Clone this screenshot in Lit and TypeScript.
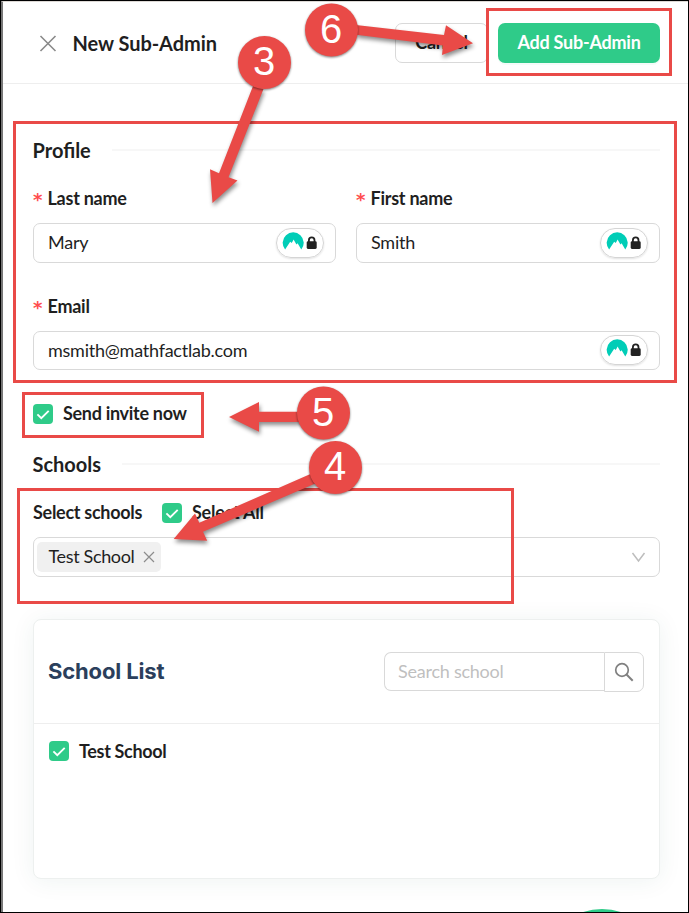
import { LitElement, html, css, svg } from 'lit';
import { customElement, property } from 'lit/decorators.js';

@customElement('check-box')
class CheckBox extends LitElement {
    static styles = css`
        :host {
            display: flex;
            align-items: center;
            gap: 10px;
            height: 20px;
            white-space: nowrap;
        }
        .box {
            width: 20px;
            height: 20px;
            border-radius: 4px;
            background: #2fcb89;
            flex: none;
        }
        .text {
            padding-bottom: var(--text-lift, 2px);
        }
        svg {
            display: block;
        }
    `;

    render() {
        return html`
            <div class="box">
                <svg width="20" height="20" viewBox="0 0 20 20" fill="none" stroke="#fff" stroke-width="1.9">
                    <path d="M4.4 10.4 L8.3 14.1 L15.7 6.9" />
                </svg>
            </div>
            <div class="text"><slot></slot></div>
        `;
    }
}

@customElement('section-title')
class SectionTitle extends LitElement {
    static styles = css`
        :host {
            display: flex;
            align-items: center;
            gap: 21px;
            height: 30px;
            font-size: 20px;
            font-weight: 700;
            white-space: nowrap;
        }
        .text {
            margin-left: -0.5px;
        }
        .line {
            flex: 1;
            height: 2px;
            background: #f7f7f7;
        }
    `;

    render() {
        return html`<div class="text"><slot></slot></div><div class="line"></div>`;
    }
}

@customElement('text-field')
class TextField extends LitElement {
    static styles = css`
        :host {
            display: block;
        }
        .label {
            display: flex;
            gap: 4.5px;
            height: 24px;
            line-height: 24px;
            margin-bottom: 13px;
            font-weight: 700;
            font-size: 18px;
            letter-spacing: -0.25px;
        }
        .star {
            color: #ff4d4f;
            font: 700 18px/27px "DejaVu Sans", sans-serif;
            width: 10px;
        }
        .input {
            box-sizing: border-box;
            height: var(--field-height, 40px);
            border: 1px solid #d9d9d9;
            border-radius: 7px;
            background: #fff;
            padding: 0 11px 0 14px;
            display: flex;
            align-items: center;
            justify-content: space-between;
        }
        .value {
            padding-bottom: 2px;
        }
        .vault {
            box-sizing: border-box;
            width: 48px;
            height: 30px;
            margin-bottom: var(--vault-lift, 0);
            border: 1px solid #d5d5d5;
            border-radius: 15px;
            box-shadow: 0 1px 2px rgba(0, 0, 0, 0.12);
            display: flex;
            align-items: center;
        }
    `;

    @property() label = '';
    @property() value = '';

    render() {
        return html`
            <div class="label"><span class="star">*</span>${this.label}</div>
            <div class="input">
                <span class="value">${this.value}</span>
                <div class="vault">
                    <svg width="46" height="28" viewBox="0 0 46 28">
                        <path fill="#00cdb7" d="M8.1 20.5 A10.5 10.5 0 1 1 24.3 20.5 L20.6 14.2 L19.4 15.6 L16.6 10.4 L15.6 12.6 L14.6 14 L13.2 12.8 Z" />
                        <path fill="none" stroke="#222" stroke-width="1.8" d="M31.9 13 V11.2 A2.8 2.8 0 0 1 37.5 11.2 V13" />
                        <rect x="29.7" y="12.3" width="10" height="7.6" rx="1.3" fill="#222" />
                    </svg>
                </div>
            </div>
        `;
    }
}

const MARK = '#e94a47';

const frames = [
    { x: 14.5, y: 122.5, w: 661, h: 259 },
    { x: 487.5, y: 9.5, w: 183, h: 65 },
    { x: 23.5, y: 393.5, w: 179, h: 43 },
    { x: 18.5, y: 489.5, w: 494, h: 113 },
];

const steps = [
    { n: 3, x: 264.5, y: 62.5, arrow: '253,86 263.5,89 228.5,177.3 237.5,180.5 212.5,203 210,169.3 219,173.3' },
    { n: 6, x: 331.5, y: 30, arrow: '356,25 444,35 446,25.3 473,43.3 442,55 443,45.4 356,34.7' },
    { n: 5, x: 323.5, y: 413, arrow: '300,411.8 259,411.8 259,402 229,417 259,431.7 259,422 300,422' },
    { n: 4, x: 335.5, y: 467.5, arrow: '311,473.7 199.3,522.7 195,513.5 173.7,539 207.2,540.7 203,531.7 316,483.3' },
];

@customElement('app-root')
class AppRoot extends LitElement {
    static styles = css`
        :host {
            display: block;
            position: relative;
            box-sizing: border-box;
            width: 689px;
            height: 913px;
            border: 1px solid #000;
            overflow: hidden;
            background: #fff;
            color: #1f1f1f;
            font: 400 18px/24px Lato, sans-serif;
            letter-spacing: -0.24px;
        }
        .drawer {
            box-sizing: border-box;
            height: 911px;
            border-left: 2px solid #777;
            border-top: 1px solid #ddd9d5;
        }
        .header {
            display: flex;
            align-items: center;
            box-sizing: border-box;
            height: 82px;
            padding: 0 28px 0 36px;
            border-bottom: 1px solid #eee;
        }
        .title {
            flex: 1;
            margin-left: 15.5px;
            font-size: 20px;
            font-weight: 700;
            letter-spacing: -0.05px;
        }
        .btn {
            box-sizing: border-box;
            height: 40px;
            padding-bottom: 2px;
            border-radius: 7px;
            display: flex;
            align-items: center;
            justify-content: center;
            font-weight: 700;
        }
        .cancel {
            width: 93px;
            border: 1px solid #d9d9d9;
            margin-right: 10px;
        }
        .add {
            width: 162px;
            background: #2fcb89;
            color: #fff;
            box-shadow: 0 2px 0 rgba(5, 145, 100, 0.04);
        }
        .body {
            padding: 51px 28px 0 30px;
        }
        .row {
            display: flex;
            gap: 20px;
        }
        .names {
            display: grid;
            grid-template-columns: 303px 304px;
            margin-top: 21px;
        }
        .email {
            margin-top: 31px;
            --field-height: 39px;
            --vault-lift: 2px;
        }
        .invite {
            margin-top: 34px;
            font-weight: 700;
            letter-spacing: -0.3px;
        }
        section-title {
            letter-spacing: 0;
        }
        .schools {
            margin-top: 25px;
        }
        .pick {
            margin-top: 24px;
            font-weight: 700;
            height: 20px;
            align-items: center;
        }
        .pick-label {
            width: 109px;
            padding-bottom: 2px;
            white-space: nowrap;
            letter-spacing: -0.28px;
        }
        .select {
            display: flex;
            align-items: center;
            justify-content: space-between;
            box-sizing: border-box;
            height: 40px;
            margin-top: 14px;
            padding: 0 13px 0 3px;
            border: 1px solid #d9d9d9;
            border-radius: 7px;
        }
        .tag {
            display: flex;
            align-items: center;
            justify-content: space-between;
            box-sizing: border-box;
            width: 124px;
            height: 30px;
            padding: 0 6px 0 11.5px;
            border-radius: 5px;
            background: #f0f0f0;
            letter-spacing: -0.35px;
        }
        .tag-text {
            padding-bottom: 2px;
        }
        .card {
            box-sizing: border-box;
            height: 260px;
            margin-top: 42px;
            border: 1px solid #edf0ef;
            border-radius: 8px;
            box-shadow: 0 2px 24px rgba(30, 90, 70, 0.07);
            background: #fff;
        }
        .card-head {
            display: flex;
            align-items: center;
            justify-content: space-between;
            box-sizing: border-box;
            height: 104px;
            padding: 0 15px 2px 14px;
            border-bottom: 1px solid #eee;
        }
        .card-title {
            font: 700 22px/30px Inter, sans-serif;
            letter-spacing: -0.15px;
            color: #2b3f5c;
        }
        .search {
            display: flex;
            align-items: flex-start;
            margin-top: 2px;
        }
        .query {
            box-sizing: border-box;
            width: 220px;
            height: 39px;
            padding: 6px 13px;
            border: 1px solid #d9d9d9;
            border-right: 0;
            border-radius: 7px 0 0 7px;
            color: #bfbfbf;
        }
        .go {
            box-sizing: border-box;
            width: 40px;
            height: 40px;
            border: 1px solid #d9d9d9;
            border-radius: 0 7px 7px 0;
            display: flex;
            align-items: center;
            justify-content: center;
        }
        .item {
            --text-lift: 0;
            margin: 17px 15px;
            font-weight: 700;
            letter-spacing: -0.33px;
        }
        .chat {
            position: absolute;
            left: 541px;
            top: 908px;
            width: 120px;
            height: 120px;
            border-radius: 50%;
            background: #2fcb89;
        }
        .marks {
            position: absolute;
            left: -1px;
            top: -1px;
            font: 400 40px "Liberation Sans", sans-serif;
            letter-spacing: 0;
        }
        .shadow {
            filter: drop-shadow(1px 3px 2px rgba(0, 0, 0, 0.45));
        }
        .badge {
            filter: drop-shadow(0 1px 1px rgba(0, 0, 0, 0.5));
        }
    `;

    render() {
        return html`
            <div class="drawer">
                <div class="header">
                    <svg width="18" height="18" viewBox="0 0 18 18" stroke="#8a8a8a" stroke-width="1.6">
                        <path d="M1.5 2 L16.5 17 M16.5 2 L1.5 17" />
                    </svg>
                    <div class="title">New Sub-Admin</div>
                    <div class="btn cancel">Cancel</div>
                    <div class="btn add">Add Sub-Admin</div>
                </div>
                <div class="body">
                    <section-title>Profile</section-title>
                    <div class="row names">
                        <text-field label="Last name" value="Mary"></text-field>
                        <text-field label="First name" value="Smith"></text-field>
                    </div>
                    <text-field class="email" label="Email" value="msmith@mathfactlab.com"></text-field>
                    <check-box class="invite">Send invite now</check-box>
                    <section-title class="schools">Schools</section-title>
                    <div class="row pick">
                        <span class="pick-label">Select schools</span>
                        <check-box>Select All</check-box>
                    </div>
                    <div class="select">
                        <div class="tag">
                            <span class="tag-text">Test School</span>
                            <svg width="12" height="12" viewBox="0 0 12 12" stroke="#8c8c8c" stroke-width="1.2">
                                <path d="M1 1 L11 11 M11 1 L1 11" />
                            </svg>
                        </div>
                        <svg width="15" height="11" viewBox="0 0 15 11" fill="none" stroke="#bdbdbd" stroke-width="1.5">
                            <path d="M1.5 1 L7.5 9 L13.5 1" />
                        </svg>
                    </div>
                    <div class="card">
                        <div class="card-head">
                            <div class="card-title">School List</div>
                            <div class="search">
                                <div class="query">Search school</div>
                                <div class="go">
                                    <svg width="20" height="20" viewBox="0 0 20 20" fill="none" stroke="#808080" stroke-width="1.7">
                                        <circle cx="8" cy="8" r="6.3" />
                                        <path d="M12.3 12.3 L18.7 18.7" stroke-width="2" />
                                    </svg>
                                </div>
                            </div>
                        </div>
                        <check-box class="item">Test School</check-box>
                    </div>
                </div>
            </div>
            <div class="chat"></div>
            <svg class="marks" width="689" height="913" viewBox="0 0 689 913">
                ${frames.map(f => svg`
                    <rect x=${f.x} y=${f.y} width=${f.w} height=${f.h} fill="none" stroke=${MARK} stroke-width="3" />
                `)}
                ${steps.map(s => svg`
                    <polygon class="shadow" points=${s.arrow} fill=${MARK} />
                    <circle class="badge" cx=${s.x} cy=${s.y} r="26.5" fill=${MARK} />
                    <text x=${s.x - 0.5} y=${s.y + 12.5} fill="#fff" text-anchor="middle">${s.n}</text>
                `)}
            </svg>
        `;
    }
}
